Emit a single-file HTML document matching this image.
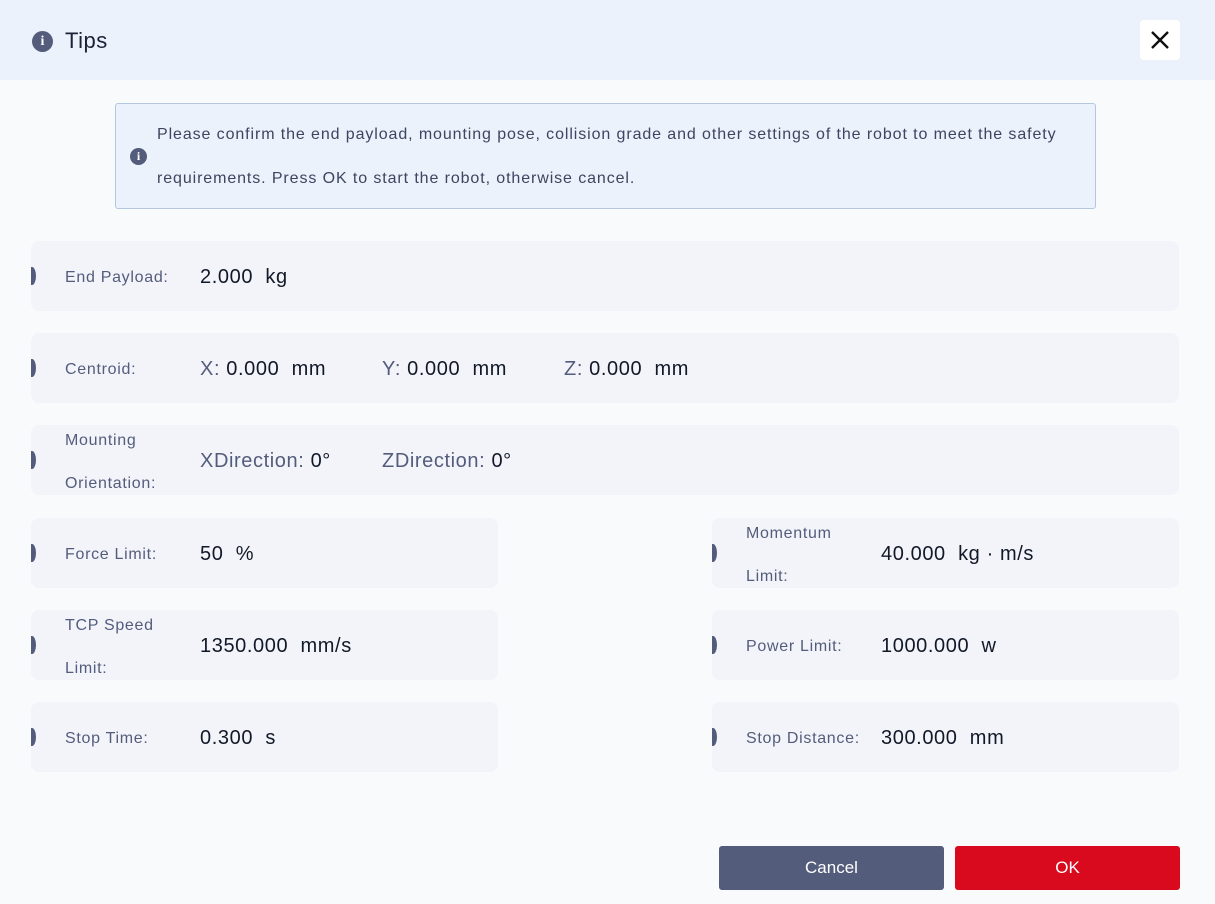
<html><head><style>
body{margin:0;width:1215px;height:904px;background:#f9fafc;font-family:"Liberation Sans",sans-serif;position:relative;overflow:hidden}
.hd{position:absolute;left:0;top:0;width:1215px;height:80px;background:#ebf2fb}
.ic{position:absolute;border-radius:50%;background:#545c7c;color:#fff;font-weight:bold;text-align:center;font-family:"Liberation Serif",serif}
.title{position:absolute;left:65px;top:28px;font-size:22px;color:#1b2236;letter-spacing:0.5px}
.x{position:absolute;left:1140px;top:20px;width:40px;height:40px;background:#fff;border-radius:4px}
.alert{position:absolute;left:115px;top:103px;width:979px;height:104px;background:#ebf2fb;border:1px solid #b4c6e0;border-radius:3px}
.alert p{position:absolute;left:41px;margin:0;font-size:16px;color:#3d4560;letter-spacing:0.9px}
.row{position:absolute;background:#f2f4f9;border-radius:8px;height:70px}
.row:before{content:"";position:absolute;left:-3px;top:26px;width:8px;height:18px;border-radius:0 50% 50% 0/0 50% 50% 0;background:#545c7c;clip-path:inset(0 0 0 3px)}
.lb{position:absolute;left:34px;font-size:16px;color:#545c7c;line-height:43px;letter-spacing:0.7px}
.v{position:absolute;top:25px;font-size:20px;color:#111827;white-space:pre;letter-spacing:0.6px}
.v span{color:#545c7c}
.btn{position:absolute;top:846px;width:225px;height:44px;border-radius:3px;color:#fff;font-size:17px;line-height:44px;text-align:center}
</style></head><body>
<div class="hd"></div>
<div class="ic" style="left:32px;top:31px;width:21px;height:21px;font-size:14px;line-height:21px">i</div>
<div class="title">Tips</div>
<div class="x"><svg width="40" height="40"><path d="M12 12L28 28M28 12L12 28" stroke="#111" stroke-width="2.4"/></svg></div>
<div class="alert">
<div class="ic" style="left:14px;top:44px;width:17px;height:17px;font-size:12px;line-height:17px">i</div>
<p style="top:22px">Please confirm the end payload, mounting pose, collision grade and other settings of the robot to meet the safety</p>
<p style="top:66px">requirements. Press OK to start the robot, otherwise cancel.</p>
</div>
<div class="row" style="left:31px;top:241px;width:1148px"><div class="lb" style="top:15px">End Payload:</div><div class="v" style="left:169px">2.000  kg</div></div>
<div class="row" style="left:31px;top:333px;width:1148px"><div class="lb" style="top:15px">Centroid:</div><div class="v" style="left:169px"><span>X:</span> 0.000  mm</div><div class="v" style="left:351px"><span>Y:</span> 0.000  mm</div><div class="v" style="left:533px"><span>Z:</span> 0.000  mm</div></div>
<div class="row" style="left:31px;top:425px;width:1148px"><div class="lb" style="top:-6px">Mounting<br>Orientation:</div><div class="v" style="left:169px"><span>XDirection:</span> 0°</div><div class="v" style="left:351px"><span>ZDirection:</span> 0°</div></div>
<div class="row" style="left:31px;top:518px;width:467px"><div class="lb" style="top:15px">Force Limit:</div><div class="v" style="left:169px">50  %</div></div>
<div class="row" style="left:712px;top:518px;width:467px"><div class="lb" style="top:-6px">Momentum<br>Limit:</div><div class="v" style="left:169px">40.000  kg · m/s</div></div>
<div class="row" style="left:31px;top:610px;width:467px"><div class="lb" style="top:-6px">TCP Speed<br>Limit:</div><div class="v" style="left:169px">1350.000  mm/s</div></div>
<div class="row" style="left:712px;top:610px;width:467px"><div class="lb" style="top:15px">Power Limit:</div><div class="v" style="left:169px">1000.000  w</div></div>
<div class="row" style="left:31px;top:702px;width:467px"><div class="lb" style="top:15px">Stop Time:</div><div class="v" style="left:169px">0.300  s</div></div>
<div class="row" style="left:712px;top:702px;width:467px"><div class="lb" style="top:15px">Stop Distance:</div><div class="v" style="left:169px">300.000  mm</div></div>
<div class="btn" style="left:719px;background:#545c7c">Cancel</div>
<div class="btn" style="left:955px;background:#d90a1e">OK</div>
</body></html>
